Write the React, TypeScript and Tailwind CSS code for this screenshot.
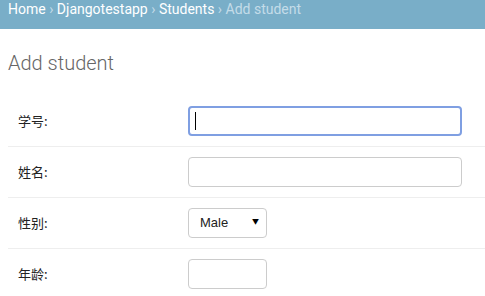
import React from 'react'

const rows = [
  { label: '学号', kind: 'focused' },
  { label: '姓名', kind: 'text' },
  { label: '性别', kind: 'select' },
  { label: '年龄', kind: 'small' },
]

function Field({ kind }: { kind: string }) {
  if (kind === 'focused') {
    return (
      <div className="relative">
        <input
          type="text"
          className="w-[274px] h-[30px] rounded-[4px] border-2 border-[#7f9fe2] bg-white outline-none"
        />
        <span className="absolute left-[7px] top-[6px] w-[1px] h-[18px] bg-black" />
      </div>
    )
  }
  if (kind === 'select') {
    return (
      <div className="relative w-[79px] h-[30px]">
        <select
          defaultValue="Male"
          className="appearance-none w-full h-full rounded-[4px] border border-[#cccccc] bg-white pl-[11px] text-[13px] text-[#222] outline-none"
          style={{ fontFamily: '"Liberation Sans", Arial, sans-serif' }}
        >
          <option>Male</option>
          <option>Female</option>
        </select>
        <span className="pointer-events-none absolute right-[8px] top-[9px] text-[7px] leading-[10px] text-black">▼</span>
      </div>
    )
  }
  return (
    <input
      type="text"
      className={`${kind === 'small' ? 'w-[79px]' : 'w-[274px]'} h-[30px] rounded-[4px] border border-[#cccccc] bg-white outline-none`}
    />
  )
}

export default function App() {
  return (
    <div className="w-[485px] h-[296px] overflow-hidden bg-white" style={{ fontFamily: 'Roboto, "Noto Sans CJK SC", sans-serif' }}>
      {/* Breadcrumbs */}
      <div className="h-[29px] bg-[#79aec8] px-[8px] pt-[1px] text-[14px] leading-[17px] text-white">
        <span>Home</span>
        <span className="text-[#c4dce8]"> › </span>
        <span>Djangotestapp</span>
        <span className="text-[#c4dce8]"> › </span>
        <span>Students</span>
        <span className="text-[#c4dce8]"> › Add student</span>
      </div>

      <div className="pl-[8px]">
        <h1 className="mt-[22px] mb-[21px] text-[20px] leading-[24px] font-light text-[#666666]">Add student</h1>

        {rows.map((row) => (
          <div key={row.label} className="flex items-center py-[10px] border-b border-[#eeeeee]">
            <label
              className="w-[180px] pl-[10px] text-[13px] text-[#222222]"
              style={{ fontFamily: '"Noto Sans CJK SC", sans-serif' }}
            >
              {row.label}:
            </label>
            <Field kind={row.kind} />
          </div>
        ))}
      </div>
    </div>
  )
}
